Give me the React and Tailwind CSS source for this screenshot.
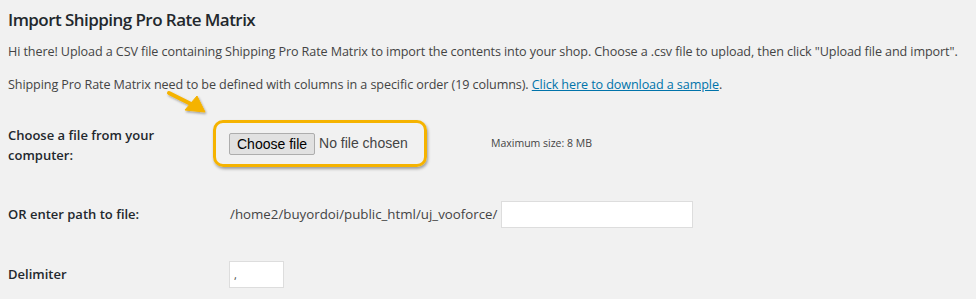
import React from "react";

const font = { fontFamily: '"Open Sans", "Noto Sans", Arial, sans-serif' };
const arial = { fontFamily: '"Liberation Sans", Arial, sans-serif' };

function Arrow() {
  return (
    <svg
      className="absolute left-[164px] top-[86px]"
      width="50"
      height="34"
      viewBox="0 0 50 34"
    >
      <defs>
        <filter id="sh" x="-20%" y="-20%" width="150%" height="150%">
          <feDropShadow dx="1" dy="1.5" stdDeviation="0.8" floodColor="#000" floodOpacity="0.35" />
        </filter>
      </defs>
      <g filter="url(#sh)" fill="#f5b300" stroke="#f5b300">
        <line x1="5" y1="7" x2="29" y2="19" strokeWidth="4" strokeLinecap="round" />
        <polygon points="41,26 21,24 33,10" strokeWidth="1" strokeLinejoin="round" />
      </g>
    </svg>
  );
}

export default function App() {
  return (
    <div className="relative min-h-[299px] w-[976px] bg-[#f1f1f1] text-[#444]" style={font}>
      <div className="px-2 pt-[2px]">
        <h2 className="text-[17px] leading-[36px] font-semibold tracking-[-0.55px] text-[#23282d]">
          Import Shipping Pro Rate Matrix
        </h2>
        <p className="mt-[5px] text-[12.6px] leading-[18px] tracking-[-0.1px]">
          Hi there! Upload a CSV file containing Shipping Pro Rate Matrix to import the contents into your shop. Choose a .csv file to upload, then click "Upload file and import".
        </p>
        <p className="mt-[15px] text-[12.6px] leading-[18px] tracking-[-0.1px]">
          Shipping Pro Rate Matrix need to be defined with columns in a specific order (19 columns).{" "}
          <a href="#" className="text-[#0073aa] underline">Click here to download a sample</a>.
        </p>

        <div className="mt-[26px] flex items-center">
          <div className="mt-[2px] w-[221px] text-[13px] leading-[20px] font-semibold text-[#23282d]">
            Choose a file from your<br />computer:
          </div>
          <div className="flex h-[47px] w-[214px] -ml-[16px] items-center rounded-[10px] border-[3px] border-[#f5b300] pl-[13px] shadow-[1px_2px_3px_rgba(0,0,0,0.35)]">
            <button className="h-[22px] rounded-[2px] border border-[#adadad] bg-[#e1e1e1] px-[7px] text-[14px] leading-[20px] text-black" style={arial}>
              Choose file
            </button>
            <span className="ml-[4px] text-[14px] text-[#444]" style={arial}>
              No file chosen
            </span>
          </div>
          <span className="ml-[64px] mt-[1px] text-[10.5px] text-[#444]">Maximum size: 8 MB</span>
        </div>

        <div className="mt-[34px] flex items-center">
          <div className="w-[222px] text-[13px] font-semibold text-[#23282d]">OR enter path to file:</div>
          <span className="text-[13.3px] text-[#444]">/home2/buyordoi/public_html/uj_vooforce/</span>
          <input className="ml-[4px] h-[27px] w-[192px] border border-[#ddd] bg-white" />
        </div>

        <div className="mt-[33px] flex items-center">
          <div className="w-[221px] text-[13px] font-semibold text-[#23282d]">Delimiter</div>
          <input defaultValue="," className="h-[27px] w-[55px] border border-[#ddd] bg-white px-[4px] text-[11px] text-[#444]" />
        </div>
      </div>
      <Arrow />
    </div>
  );
}
